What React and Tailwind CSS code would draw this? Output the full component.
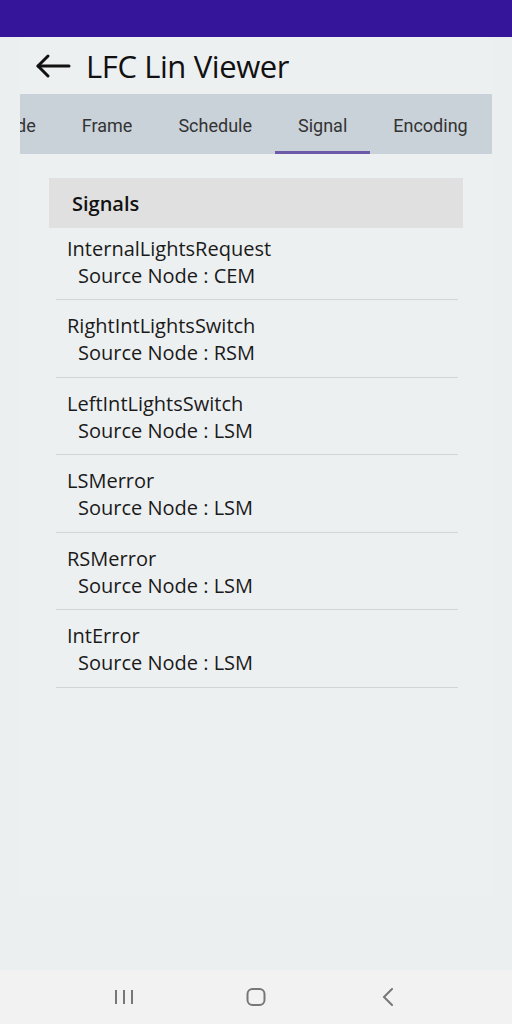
import React from 'react';

const signals = [
  { name: 'InternalLightsRequest', node: 'CEM' },
  { name: 'RightIntLightsSwitch', node: 'RSM' },
  { name: 'LeftIntLightsSwitch', node: 'LSM' },
  { name: 'LSMerror', node: 'LSM' },
  { name: 'RSMerror', node: 'LSM' },
  { name: 'IntError', node: 'LSM' },
];

const tabs = ['Node', 'Frame', 'Schedule', 'Signal', 'Encoding'];

const App = () => {
  return (
    <div className="w-[512px] h-[1024px] flex flex-col bg-[#ebeff0] overflow-hidden" style={{ fontFamily: '"Open Sans", sans-serif' }}>
      {/* status bar */}
      <div className="h-[37px] bg-[#35169a] shrink-0" />

      <div className="flex-1 flex flex-col">
        <div className="mx-[20px] h-[860px] bg-[#edf0f1] flex flex-col">
          {/* title */}
          <div className="h-[57px] flex items-center pl-[15px] pt-[1px]">
            <svg width="36" height="26" viewBox="0 0 36 26" fill="none" stroke="#111" strokeWidth="3" strokeLinecap="round" strokeLinejoin="round">
              <path d="M34 13H3" />
              <path d="M13 3L3 13l10 10" />
            </svg>
            <span className="ml-[15px] text-[31px] text-[#111] tracking-[-0.4px]">LFC Lin Viewer</span>
          </div>

          {/* tabs */}
          <div className="h-[60px] bg-[#c9d1d9] relative overflow-hidden" style={{ fontFamily: 'Roboto, sans-serif' }}>
            <div className="absolute top-0 left-[-50px] h-full flex">
              {tabs.map((t) => (
                <div key={t} className="relative h-full flex items-center justify-center px-[23px] pt-[2px] text-[18px] text-[#333]">
                  {t}
                  {t === 'Signal' && <div className="absolute bottom-0 left-0 right-0 h-[3px] bg-[#6d5aa8]" />}
                </div>
              ))}
            </div>
          </div>

          {/* list */}
          <div className="mt-[24px] mx-[29px]">
            <div className="h-[50px] bg-[#e0e0e0] flex items-center pl-[23px] pt-[2px] text-[20px] font-semibold text-[#111]">
              Signals
            </div>
            <div className="pl-[7px] pr-[5px]">
              {signals.map((s, i) => (
                <div key={s.name} className={`border-b border-[#d3d6d8] pl-[11px] ${i === 0 ? 'pt-[7px] pb-[10px]' : 'pt-[12px] pb-[10.6px]'}`}>
                  <div className="text-[20px] leading-[27px] text-[#1a1a1a]">{s.name}</div>
                  <div className="text-[20px] leading-[27px] text-[#1a1a1a] pl-[11px]">Source Node : {s.node}</div>
                </div>
              ))}
            </div>
          </div>
        </div>
        <div className="flex-1" />
      </div>

      {/* nav bar */}
      <div className="h-[54px] bg-[#f2f2f2] shrink-0 flex justify-center">
        <div className="w-[396px] flex items-center">
          <div className="flex-1 flex justify-center">
            <svg width="20" height="16" viewBox="0 0 20 16" stroke="#777" strokeWidth="2">
              <path d="M2 1v14M10 1v14M18 1v14" />
            </svg>
          </div>
          <div className="flex-1 flex justify-center">
            <svg width="20" height="18" viewBox="0 0 20 18" fill="none" stroke="#777" strokeWidth="2">
              <rect x="1.5" y="1" width="17" height="16" rx="5" />
            </svg>
          </div>
          <div className="flex-1 flex justify-center">
            <svg width="12" height="18" viewBox="0 0 12 18" fill="none" stroke="#777" strokeWidth="2" strokeLinecap="round">
              <path d="M10 1L2 9l8 8" />
            </svg>
          </div>
        </div>
      </div>
    </div>
  );
};

export default App;
